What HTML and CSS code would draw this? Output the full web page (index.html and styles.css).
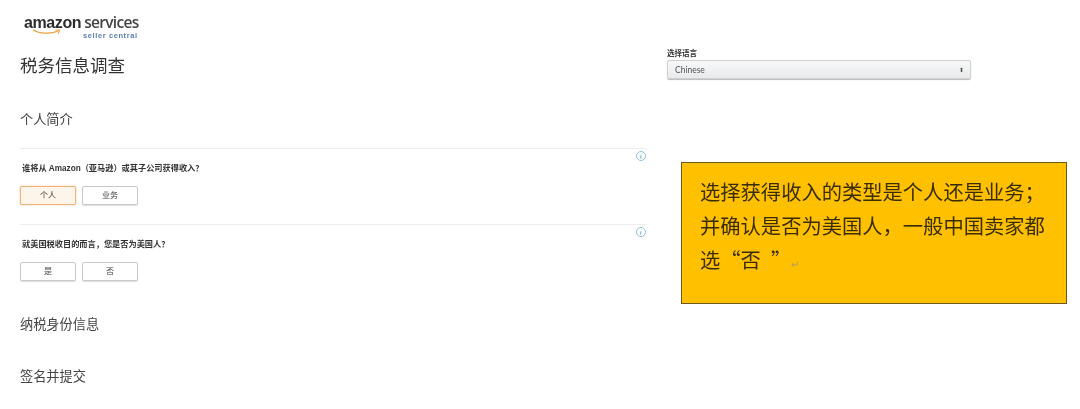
FILE: index.html
```html
<!DOCTYPE html>
<html lang="zh">
<head>
<meta charset="utf-8">
<title>税务信息调查</title>
<link rel="stylesheet" href="styles.css">
</head>
<body>
<div class="page">
  <main class="left">
    <div class="logo">
      <div class="logo-top"><span class="logo-amazon">amazon</span><span class="logo-services">services</span></div>
      <svg class="logo-smile" viewBox="0 0 32 8" aria-hidden="true"><path d="M1 1.500C8 6 20 6.500 28 3" fill="none" stroke="#e8a33d" stroke-width="1.300"/><path d="M25 1.500L29.500 2L28 6" fill="none" stroke="#e8a33d" stroke-width="1.100"/></svg>
      <div class="logo-sub">seller central</div>
    </div>
    <h1 class="title">税务信息调查</h1>
    <h2 class="section intro">个人简介</h2>
    <section class="question">
      <svg class="info" viewBox="0 0 12 12" aria-hidden="true"><circle cx="6" cy="6" r="4.500" fill="none" stroke="#8fc0d8"/><path d="M6.300 3.500V3.800M6 5.300L5.700 8.500" stroke="#6fa8c8" fill="none"/></svg>
      <p class="q-text">谁将从 Amazon（亚马逊）或其子公司获得收入？</p>
      <div class="buttons"><button class="btn active">个人</button><button class="btn">业务</button></div>
    </section>
    <section class="question second">
      <svg class="info" viewBox="0 0 12 12" aria-hidden="true"><circle cx="6" cy="6" r="4.500" fill="none" stroke="#8fc0d8"/><path d="M6.300 3.500V3.800M6 5.300L5.700 8.500" stroke="#6fa8c8" fill="none"/></svg>
      <p class="q-text">就美国税收目的而言，您是否为美国人？</p>
      <div class="buttons"><button class="btn">是</button><button class="btn">否</button></div>
    </section>
    <h2 class="section tax">纳税身份信息</h2>
    <h2 class="section sign">签名并提交</h2>
  </main>
  <aside class="right">
    <label class="lang-label">选择语言</label>
    <div class="select"><span>Chinese</span><span class="arrows">⬍</span></div>
    <div class="note">选择获得收入的类型是个人还是业务；<br>并确认是否为美国人，一般中国卖家都<br>选“否&#8194;”<span class="return">↵</span></div>
  </aside>
</div>
</body>
</html>
```
FILE: styles.css
```css
* { box-sizing: border-box; }
html, body { margin: 0; padding: 0; }
body {
  width: 1080px;
  height: 409px;
  overflow: hidden;
  background: #fff;
  color: #333;
  font-family: "Liberation Sans", "Noto Sans CJK SC", sans-serif;
  text-spacing-trim: space-all;
}
.page { display: flex; height: 409px; filter: blur(0.35px); }
.left { width: 647px; padding-left: 20px; flex: none; }
.logo { position: relative; margin: 14px 0 0 4px; height: 25px; }
.logo-top { display: flex; gap: 3px; line-height: 17px; color: #2c2c2c; }
.logo-amazon { font-size: 16px; font-weight: 700; letter-spacing: -0.4px; }
.logo-services { font-family: "Open Sans", sans-serif; font-size: 15.5px; font-weight: 600; color: #444; letter-spacing: -0.7px; }
.logo-smile { position: absolute; left: 8px; top: 14px; width: 30px; height: 8px; }
.logo-sub { margin: 1px 0 0 59px; font-size: 7.5px; line-height: 8px; font-weight: 700; color: #5b7db5; letter-spacing: 0.6px; }
.title { margin: 15px 0 0; font-size: 17.5px; line-height: 24px; font-weight: 400; color: #333; }
.section { margin: 0; font-size: 13.2px; line-height: 18px; font-weight: 400; color: #444; }
.intro { margin-top: 33px; }
.question { position: relative; margin-top: 19px; border-top: 1px solid #eeeeee; height: 76px; }
.question.second { margin-top: 0; height: 76px; }
.info { position: absolute; right: 0; top: 1px; width: 12px; height: 12px; }
.q-text { margin: 14px 0 0 2px; font-size: 8.2px; line-height: 12px; font-weight: 700; color: #333; }
.buttons { display: flex; gap: 6px; margin-top: 11px; }
.btn {
  width: 56px;
  height: 19px;
  padding: 0;
  border: 1px solid #c9c9c9;
  border-radius: 2px;
  background: #fff;
  box-shadow: 0 1px 1px #ddd;
  font: 8px/1 "Liberation Sans", "Noto Sans CJK SC", sans-serif;
  color: #444;
}
.btn.active { border-color: #eeb27a; background: #fdf4ea; box-shadow: 0 0 2px #f5c690; color: #333; }
.tax { margin-top: 16px; }
.sign { margin-top: 34px; }
.right { flex: 1; padding: 49px 0 0 20px; }
.lang-label { display: block; font-size: 7.5px; line-height: 10px; font-weight: 700; color: #333; }
.select {
  display: flex;
  justify-content: space-between;
  align-items: center;
  width: 304px;
  height: 19px;
  margin-top: 1px;
  padding: 0 6px 0 7px;
  border: 1px solid #d0d0d0;
  border-radius: 2px;
  background: linear-gradient(#f7f8f8, #e9eaec);
  box-shadow: 0 1px 1px #bbb;
  font-family: Lato, sans-serif;
  font-size: 8.5px;
  color: #555;
}
.arrows { font-size: 6px; }
.note {
  width: 386px;
  height: 142px;
  margin: 83px 0 0 14px;
  padding: 11px 18px 0;
  border: 1px solid #6e5a14;
  background: #ffc000;
  font-family: "Noto Sans CJK SC", sans-serif;
  font-size: 20.3px;
  line-height: 34px;
  color: #3a2d00;
  white-space: nowrap;
}
.return { font-size: 10px; color: #a89a70; }
```
